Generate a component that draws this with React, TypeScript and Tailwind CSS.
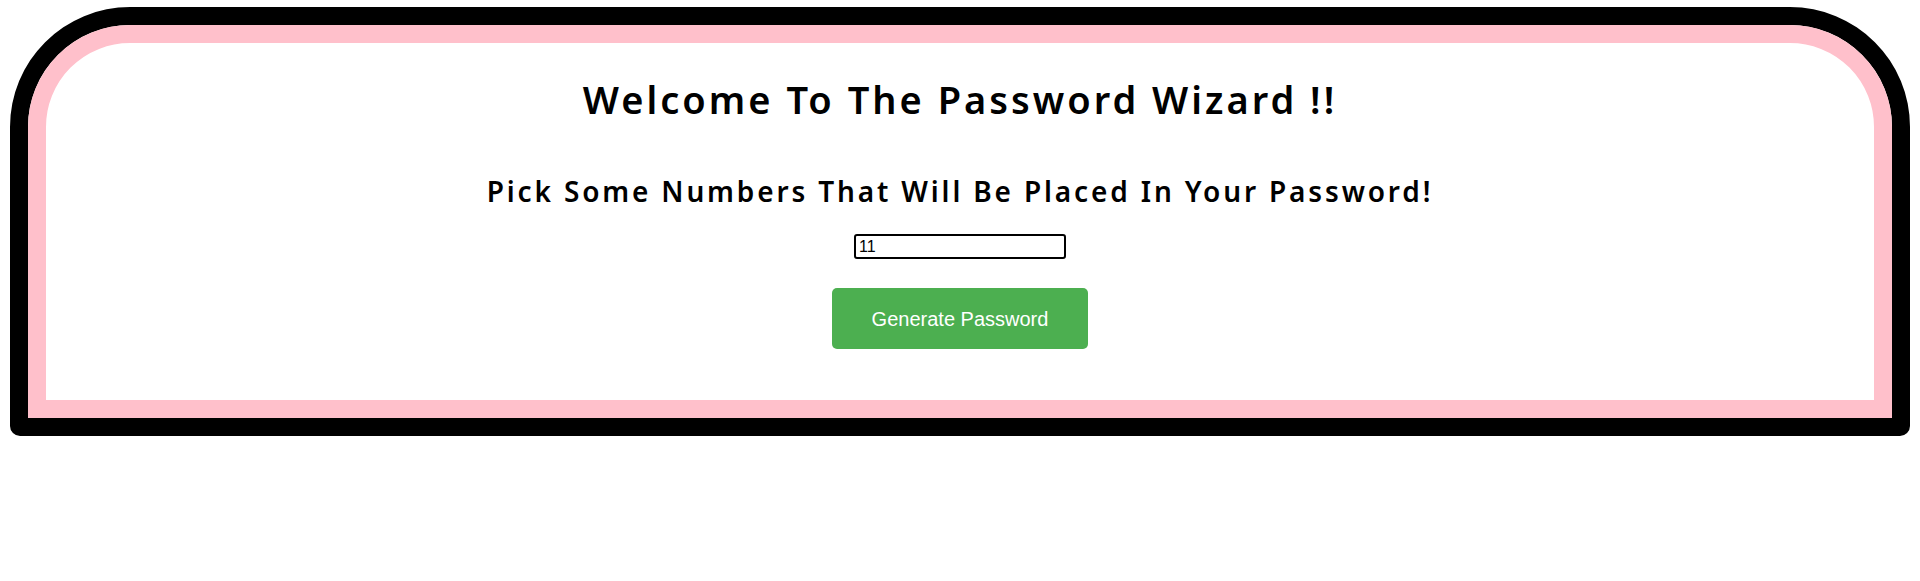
export default function App() {
  return (
    <div className="min-h-[581px] w-full bg-white px-[10px] pt-[7px]">
      {/* outer black frame */}
      <div className="rounded-t-[120px] rounded-b-[10px] border-[18px] border-black">
        {/* pink inner frame */}
        <div className="rounded-t-[102px] border-[18px] border-[#ffc0cb] bg-white pt-[33px] pb-[51px] text-center">
          <h1 className="font-['Trebuchet_MS','Noto_Sans',sans-serif] text-[38px] leading-[46px] font-semibold tracking-[3px] text-black">
            Welcome To The Password Wizard !!
          </h1>
          <h2 className="mt-[52px] font-['Trebuchet_MS','Noto_Sans',sans-serif] text-[28px] leading-[34px] font-semibold tracking-[2.85px] text-black">
            Pick Some Numbers That Will Be Placed In Your Password!
          </h2>
          <div className="mt-[26px] flex justify-center">
            <input
              type="text"
              defaultValue="11"
              className="h-[25px] w-[212px] rounded-[3px] border-2 border-black px-[3px] font-['Liberation_Sans',Arial,sans-serif] text-[16px] text-black outline-none"
            />
          </div>
          <div className="mt-[29px] flex justify-center">
            <button className="h-[61px] w-[256px] rounded-[5px] bg-[#4caf50] font-['Liberation_Sans',Arial,sans-serif] text-[20px] text-white">
              Generate Password
            </button>
          </div>
        </div>
      </div>
    </div>
  );
}
